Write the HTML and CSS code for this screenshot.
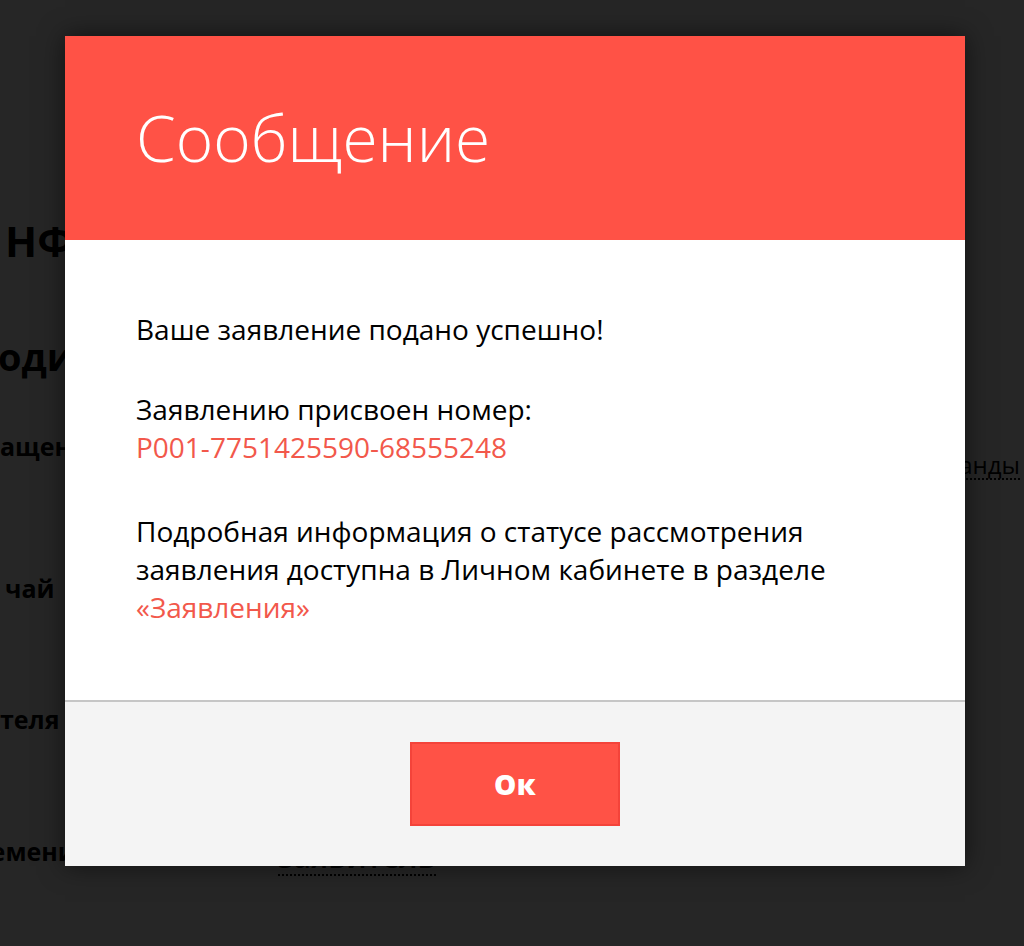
FILE: index.html
```html
<!DOCTYPE html>
<html lang="ru">
<head>
<meta charset="utf-8">
<title>Сообщение</title>
<link rel="stylesheet" href="styles.css">
</head>
<body>
<div class="page">
  <h1 class="page-title">НФОРМАЦИЯ</h1>
  <h2 class="page-sub">одители</h2>
  <div class="row row-1"><span class="label">ащение</span><span class="value">команды</span></div>
  <div class="row row-2"><span class="label label-in">чай</span></div>
  <div class="row row-3"><span class="label">теля</span></div>
  <div class="row row-4"><span class="label-col"><span class="label label-cut">Времени</span></span><span class="value value-mid">заявитель</span></div>
</div>
<div class="overlay">
  <div class="modal">
    <div class="modal-header">
      <h2 class="modal-title">Сообщение</h2>
    </div>
    <div class="modal-body">
      <p class="msg msg-1">Ваше заявление подано успешно!</p>
      <p class="msg msg-2">Заявлению присвоен номер:<br><span class="accent">P001-7751425590-68555248</span></p>
      <p class="msg msg-3">Подробная информация о статусе рассмотрения заявления доступна в Личном кабинете в разделе <a class="accent link">«Заявления»</a></p>
    </div>
    <div class="modal-footer">
      <button class="btn" type="button">Ок</button>
    </div>
  </div>
</div>
</body>
</html>
```
FILE: styles.css
```css
html, body {
  margin: 0;
  padding: 0;
}
body {
  background: #ffffff;
  font-family: "Open Sans", "Noto Sans", sans-serif;
  color: #000;
  width: 1024px;
  height: 946px;
  overflow: hidden;
  position: relative;
}

/* underlying page */
.page {
  display: flex;
  flex-direction: column;
  padding-top: 216px;
}
.page-title {
  margin: 0 0 0 5px;
  font-size: 42px;
  line-height: 50px;
  font-weight: 700;
}
.page-sub {
  margin: 65px 0 0 -2px;
  font-size: 38px;
  line-height: 50px;
  font-weight: 700;
}
.row {
  display: flex;
  align-items: flex-start;
  font-size: 25px;
  line-height: 30px;
}
.label {
  font-weight: 700;
  white-space: nowrap;
}
.label-in { margin-left: 5px; }
.label-col {
  width: 278px;
  flex: none;
  overflow: hidden;
}
.label-cut {
  display: inline-block;
  margin-left: -42px;
}
.value {
  border-bottom: 2px dotted #000;
  line-height: 26px;
  white-space: nowrap;
  font-size: 24px;
}
.row-1 {
  margin-top: 50px;
  justify-content: space-between;
  padding-right: 4px;
}
.row-1 .value { margin-top: 21px; }
.row-2 { margin-top: 93px; }
.row-3 { margin-top: 101px; }
.row-4 { margin-top: 102px; }
.value-mid {
  margin-top: 4px;
  font-size: 30px;
  line-height: 34px;
  font-weight: 600;
}

/* overlay + modal */
.overlay {
  position: absolute;
  inset: 0;
  background: rgba(0, 0, 0, 0.85);
  padding: 36px 0 0 65px;
}
.modal {
  width: 900px;
  display: flex;
  flex-direction: column;
  box-shadow: 0 0 24px rgba(0, 0, 0, 0.55);
}
.modal-header {
  height: 204px;
  background: #ff5246;
  display: flex;
  align-items: center;
  padding-left: 71px;
}
.modal-title {
  margin: 0;
  color: #fff;
  font-size: 64px;
  line-height: 64px;
  font-weight: 300;
}
.modal-body {
  background: #fff;
  padding: 70px 71px 74px;
}
.msg {
  margin: 0;
  font-size: 28px;
  line-height: 38px;
  color: #000;
}
.msg-1 { margin-bottom: 42px; }
.msg-2 { margin-bottom: 46px; }
.accent {
  color: #f2584b;
}
.link { text-decoration: none; }
.modal-footer {
  background: #f4f4f4;
  border-top: 2px solid #c6c6c6;
  padding: 40px 0;
  display: flex;
  justify-content: center;
}
.btn {
  width: 210px;
  height: 84px;
  background: #ff5246;
  border: 2px solid #f4433a;
  color: #fff;
  font-family: "Open Sans", "Noto Sans", sans-serif;
  font-size: 28px;
  font-weight: 800;
  letter-spacing: 0.5px;
  padding: 0;
}
```
